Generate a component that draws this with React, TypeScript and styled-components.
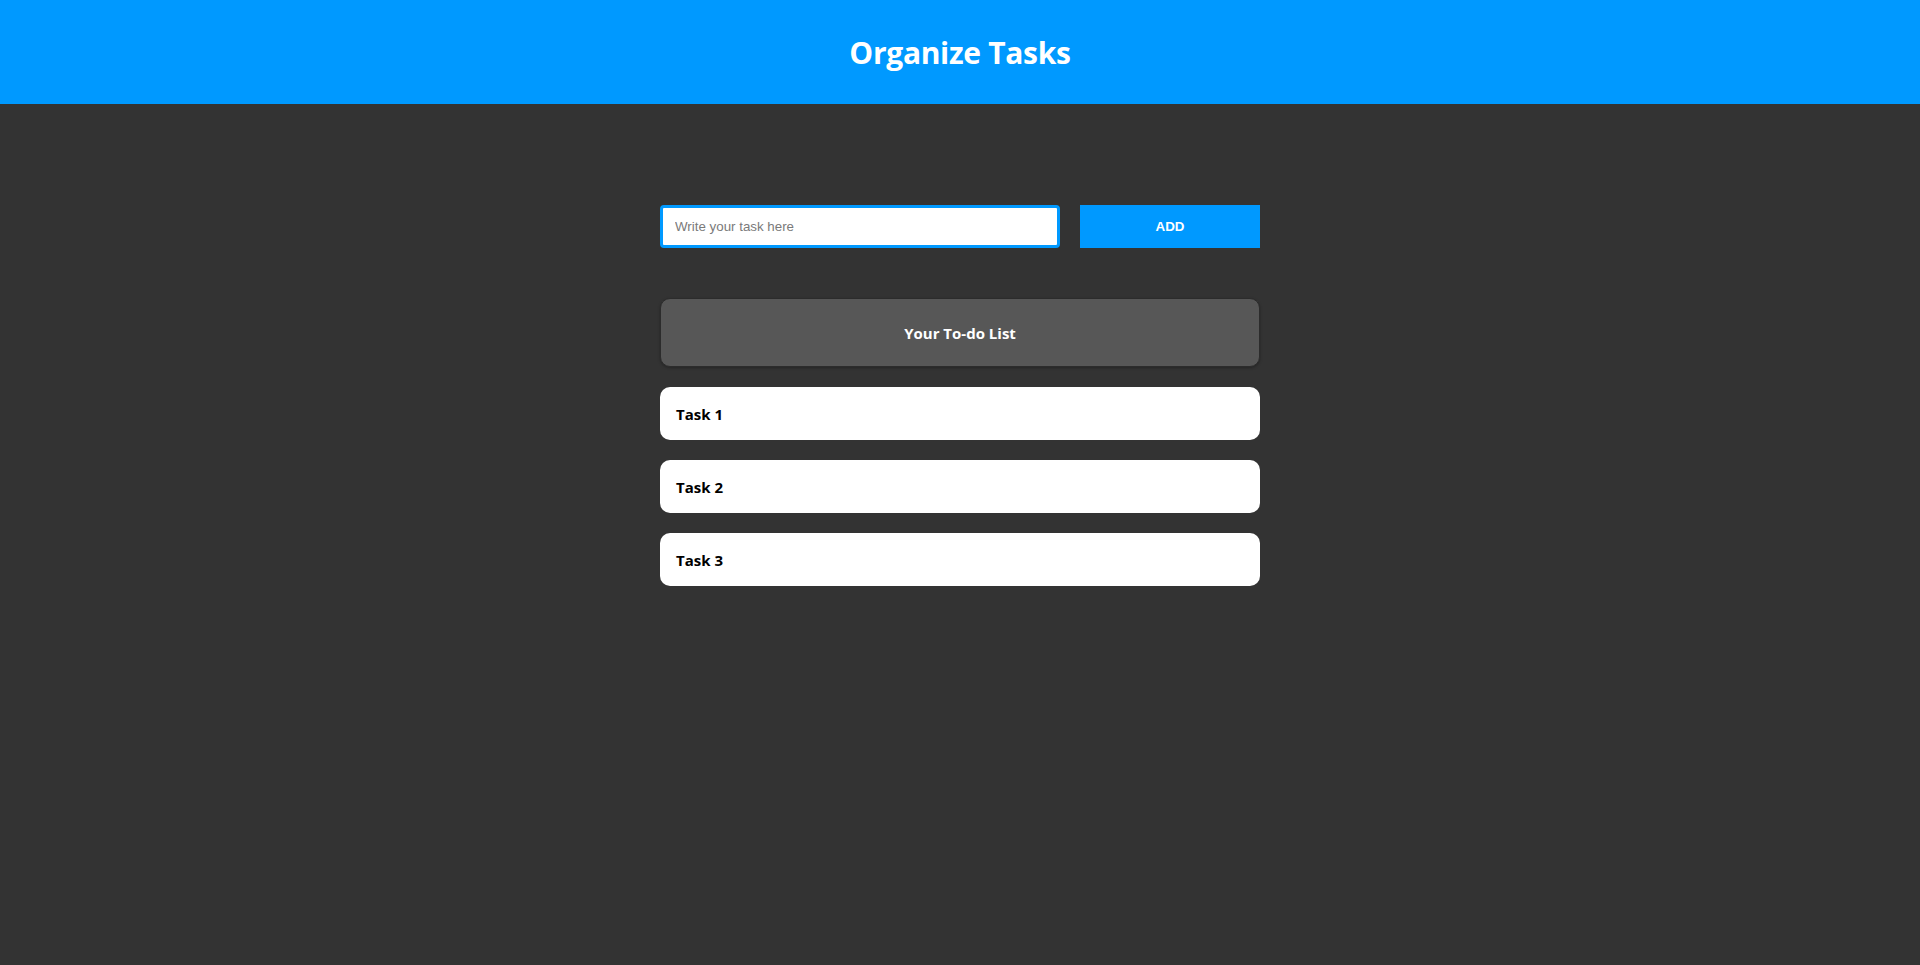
import React, { useState } from "react";
import styled, { createGlobalStyle } from "styled-components";

const GlobalStyle = createGlobalStyle`
  html, body {
    margin: 0;
    padding: 0;
    background: #333333;
    min-height: 100%;
  }
  body {
    font-family: "Open Sans", "Noto Sans", sans-serif;
  }
`;

const Page = styled.div`
  min-height: 965px;
  background: #333333;
`;

const Header = styled.header`
  height: 104px;
  background: #0099ff;
  display: flex;
  align-items: center;
  justify-content: center;
`;

const Title = styled.h1`
  margin: 0;
  color: #ffffff;
  font-size: 30px;
  font-weight: 700;
  letter-spacing: -0.3px;
`;

const Main = styled.main`
  width: 600px;
  margin: 0 auto;
  padding-top: 101px;
`;

const Form = styled.form`
  display: flex;
  gap: 20px;
  margin-bottom: 50px;
`;

const TaskInput = styled.input`
  box-sizing: border-box;
  width: 400px;
  height: 43px;
  border: 3px solid #0099ff;
  border-radius: 4px;
  padding: 0 12px;
  font-family: "Liberation Sans", Arial, sans-serif;
  font-size: 13.33px;
  color: #222;
  outline: none;

  &::placeholder {
    color: #7a7a7a;
  }
`;

const AddButton = styled.button`
  width: 180px;
  height: 43px;
  border: none;
  background: #0099ff;
  color: #ffffff;
  font-family: "Liberation Sans", Arial, sans-serif;
  font-size: 13.33px;
  font-weight: 700;
  cursor: pointer;
`;

const List = styled.div`
  display: flex;
  flex-direction: column;
  gap: 20px;
`;

const ListHeader = styled.div`
  box-sizing: border-box;
  height: 69px;
  display: flex;
  align-items: center;
  justify-content: center;
  background: #575757;
  border: 1px solid #2c2c2c;
  border-radius: 10px;
  box-shadow: 0 1px 3px rgba(0, 0, 0, 0.3);
  color: #ffffff;
  font-size: 15px;
  font-weight: 700;
`;

const TaskItem = styled.div`
  box-sizing: border-box;
  height: 53px;
  display: flex;
  align-items: center;
  padding: 0 16px;
  background: #ffffff;
  border-radius: 10px;
  color: #000000;
  font-size: 15px;
  font-weight: 700;
`;

export default function App() {
  const [text, setText] = useState("");
  const [tasks, setTasks] = useState(["Task 1", "Task 2", "Task 3"]);

  const addTask = (e: React.FormEvent) => {
    e.preventDefault();
    if (!text.trim()) return;
    setTasks([...tasks, text.trim()]);
    setText("");
  };

  return (
    <Page>
      <GlobalStyle />
      <Header>
        <Title>Organize Tasks</Title>
      </Header>
      <Main>
        <Form onSubmit={addTask}>
          <TaskInput
            placeholder="Write your task here"
            value={text}
            onChange={(e) => setText(e.target.value)}
          />
          <AddButton type="submit">ADD</AddButton>
        </Form>
        <List>
          <ListHeader>Your To-do List</ListHeader>
          {tasks.map((t, i) => (
            <TaskItem key={i}>{t}</TaskItem>
          ))}
        </List>
      </Main>
    </Page>
  );
}
